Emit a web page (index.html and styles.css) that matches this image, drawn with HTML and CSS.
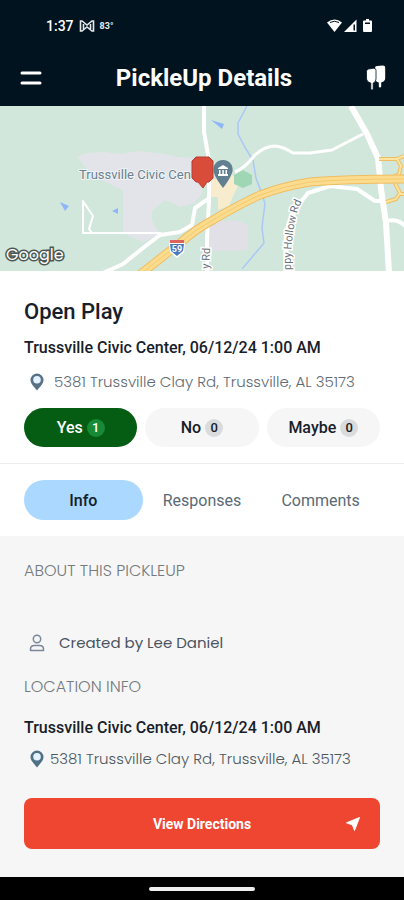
FILE: index.html
```html
<!DOCTYPE html>
<html lang="en">
<head>
<meta charset="utf-8">
<meta name="viewport" content="width=device-width, initial-scale=1">
<title>PickleUp Details</title>
<link rel="stylesheet" href="styles.css">
</head>
<body>
<div class="app">
  <header class="top">
    <div class="status">
      <span class="clock">1:37</span>
      <svg class="glyph" width="16" height="12" viewBox="0 0 16 12" fill="none" stroke="#e6eaec" stroke-width="1.600"><path d="M3 11H1.500V1H3l5 4 5-4h1.500v10H13L8 7z"/><path d="M4.500 4v5M11.500 4v5"/></svg>
      <span class="temp">83°</span>
      <span class="radios">
        <svg width="15" height="14" viewBox="0 0 15 14"><path d="M0 3.500Q7.500-2.500 15 3.500L7.500 13z" fill="#fff"/><path d="M3 3.500q4.500-2.500 9 0" stroke="#00131f" stroke-width="1" fill="none"/></svg>
        <svg width="13" height="14" viewBox="0 0 13 14"><path d="M12.500.5v12.500H0z" fill="#fff"/><path d="M9.500 5.500h1.500v6H9.500z" fill="#00131f"/></svg>
        <svg class="battery" width="9" height="14" viewBox="0 0 9 14"><path d="M3 0h3v1.500h2q1 0 1 1V12q0 1-1 1H1q-1 0-1-1V2.500q0-1 1-1h2z" fill="#fff"/><path d="M2 3.500h5v1.500H2z" fill="#00131f"/></svg>
      </span>
    </div>
    <div class="bar">
      <button class="icon-button" type="button" aria-label="Menu">
        <svg width="22" height="16" viewBox="0 0 22 16" stroke="#fff" stroke-width="3" stroke-linecap="round"><path d="M2 3h18M2 13h18"/></svg>
      </button>
      <h1 class="title">PickleUp Details</h1>
      <button class="icon-button" type="button" aria-label="Paddles">
        <svg width="20" height="26" viewBox="0 0 20 26" fill="#fff"><path d="M9 3q0-2 2-2l6-.5q2.200 0 2.200 2V13q0 3-3 4l-1 .4v4q0 1-1.200 1t-1.200-1v-4Q9 17 9 12z"/><path d="M2.500 4l5-.8q2.500 0 2.500 2V14q0 3-2.800 4v6q0 1-1.200 1t-1.200-1v-6Q.5 17 .5 13V6.500Q.5 4.300 2.500 4z" stroke="#00131f" stroke-width=".8"/></svg>
      </button>
    </div>
  </header>

  <svg class="map" viewBox="0 0 404 165" preserveAspectRatio="xMidYMid slice" role="img" aria-label="Map of Trussville Civic Center">
    <defs>
      <path id="hollow" d="M291 164Q290 132 298 104L305 88"/>
      <path id="hwy" d="M138 170L180 137Q196 123 213 114Q238 99 260 89Q284 80 310 76Q345 73 404 73"/>
    </defs>
    <path fill="#d2e7db" d="M0 0h404v165H0z"/>
    <path fill="#e3e4e9" d="M77 51l9-4 18-1 16 2 20-3 24 3 14 3 15 1 9 5v31l-7 9-15 4-15-7-13 11v10l8 13-17 8-20-9V85l-19-10-14-7-7-10z"/>
    <path fill="#e0e0e6" d="M209 115h32l7 5v24l-15 1h-24z"/>
    <path fill="#f7eccd" d="M207 76l24-9 8 11-5 10-5 12-11 4v-13h-11z"/>
    <path fill="#9fd7b4" d="M234 69l9-5 9 5v9l-9 4-9-4z"/>
    <path fill="#8fb6fa" d="M211 14l13 4-2 5zM60 96l9 4-4 5zM112 105l6-3v6z"/>
    <path fill="none" stroke="#aac8f7" stroke-width="1.500" d="M247 0l-9 17v11l8 15 7 11 3 18 6 16 3 10-2 15-1 9 2 15-22 26"/>
    <g fill="none" stroke="#fff" stroke-linejoin="round">
      <path stroke-width="2" d="M161 127H83V95l10 15-4 13 3 4"/>
      <path stroke-width="4" d="M103 167l20-9 20-16 17-13 20-3 12-7 3-17 13-9"/>
      <path stroke-width="4" d="M204 0v26l5 28v40l-2 40v33"/>
      <path stroke-width="3" d="M235 66q10-4 20-17 10-9 20-9 9 1 18 7h17l22-3 31-16"/>
      <path stroke-width="6" d="M351 0l16 28 11 24 3 31 5 34 3 50"/>
      <path stroke-width="4" d="M381 95h-6l-18-12-27-3-22 7-8 10-8 9M387 115q11-3 19 6"/>
      <path stroke-width="5" d="M296 103q-10 15-10 35v29"/>
    </g>
    <g fill="none" stroke="#efbd61" stroke-width="4">
      <path d="M379 53h18l4 7-2 8-7 4M397 53l7-3M394 75l6 12-4 6-10 3M399 88h6"/>
      <path stroke="#fbe3a0" stroke-width="2" d="M379 53h18l4 7-2 8-7 4M397 53l7-3M394 75l6 12-4 6-10 3M399 88h6"/>
      <use href="#hwy" stroke-width="9"/>
      <use href="#hwy" stroke="#fbdc8e" stroke-width="7"/>
      <use href="#hwy" stroke="#f5ca70" stroke-width="1"/>
    </g>
    <path fill="#fff" d="M169 137h16l-1 9-7 6-7-6z"/>
    <path fill="#4b78bd" d="M170 138h14l-1 7-6 5-6-5z"/><path fill="#dc625d" d="M170 134h14v3h-14z"/>
    <text x="177" y="146" class="shield" text-anchor="middle">59</text>
    <text x="79" y="73" class="place">Trussville Civic Cen</text>
    <text class="road"><textPath href="#hollow">ppy Hollow Rd</textPath></text>
    <text class="road" transform="translate(209 163) rotate(-87)">y Rd</text>
    <path fill="#d94c39" stroke="#b93d32" stroke-width="1" d="M196 51h13l4 4v17l-4 4h-2l-4 6-5-6h-2l-4-4V55z"/>
    <path fill="#617f90" d="M223 54a9.500 9.500 0 0 1 9 13q-2 6-9 15-7-9-9-15a9.500 9.500 0 0 1 9-13z"/>
    <path fill="#fff" d="M218 62l5-3 5 3v1h-10zM218 68h10v2h-10zM219 64h1.500v4H219zM222.300 64h1.500v4h-1.500zM225.500 64h1.500v4h-1.500z"/>
    <text x="6" y="154" class="google">Google</text>
  </svg>

  <main class="main">
    <section class="summary">
      <h2 class="event">Open Play</h2>
      <p class="venue">Trussville Civic Center, 06/12/24 1:00 AM</p>
      <p class="address"><svg class="pin" width="14" height="18" viewBox="0 0 14 18"><path d="M7 .5a6.500 6.500 0 0 1 6.500 6.500c0 4-4 7-6.500 10.500C4.500 14 .5 11 .5 7A6.500 6.500 0 0 1 7 .5z" fill="#587186"/><circle cx="7" cy="6.800" r="3.800" fill="#e4f2ff"/></svg>5381 Trussville Clay Rd, Trussville, AL 35173</p>
      <div class="votes">
        <button class="vote vote-on" type="button">Yes <span class="count">1</span></button>
        <button class="vote" type="button">No <span class="count">0</span></button>
        <button class="vote" type="button">Maybe <span class="count">0</span></button>
      </div>
    </section>
    <nav class="tabs">
      <button class="tab tab-on" type="button">Info</button>
      <button class="tab" type="button">Responses</button>
      <button class="tab" type="button">Comments</button>
    </nav>
    <section class="details">
      <h3 class="label">ABOUT THIS PICKLEUP</h3>
      <p class="creator"><svg width="16" height="18" viewBox="0 0 16 18" fill="none" stroke="#7c8799" stroke-width="1.500"><circle cx="8" cy="5" r="3.700"/><path d="M1.500 16.500v-1.500q0-3.500 4-3.500h5q4 0 4 3.500v1.500z" stroke-linejoin="round"/></svg>Created by Lee Daniel</p>
      <h3 class="label">LOCATION INFO</h3>
      <p class="venue">Trussville Civic Center, 06/12/24 1:00 AM</p>
      <p class="address address-tight"><svg class="pin" width="14" height="18" viewBox="0 0 14 18"><path d="M7 .5a6.500 6.500 0 0 1 6.500 6.500c0 4-4 7-6.500 10.500C4.500 14 .5 11 .5 7A6.500 6.500 0 0 1 7 .5z" fill="#4f7186"/><circle cx="7" cy="6.800" r="3.800" fill="#e4f2ff"/></svg>5381 Trussville Clay Rd, Trussville, AL 35173</p>
      <button class="directions" type="button"><span>View Directions</span><svg width="14" height="14" viewBox="0 0 14 14" fill="#fff"><path d="M13.500.5L8.500 13.500 6.500 8 .5 5.800z" stroke="#fff" stroke-linejoin="round"/></svg></button>
    </section>
  </main>
  <footer class="system"><span class="handle"></span></footer>
</div>
</body>
</html>
```
FILE: styles.css
```css
* { box-sizing: border-box; }
body { margin: 0; font-family: Roboto, sans-serif; color: #17202a; background: #f6f6f6; }
h1, h2, h3, p { margin: 0; }
button { font: inherit; color: inherit; border: 0; padding: 0; background: none; }
svg { flex: none; }

.app { display: flex; flex-direction: column; min-height: 100vh; }

.top { background: #00131f; color: #fff; padding-bottom: 8px; }
.status { display: flex; align-items: center; gap: 5px; height: 50px; padding: 2px 32px 0 46px; }
.clock { font-size: 14px; font-weight: 500; }
.temp { font-size: 9px; font-weight: 700; color: #e6eaec; }
.radios { display: flex; align-items: center; gap: 2px; margin-left: auto; }
.battery { margin-left: 4px; }
.bar { display: flex; align-items: center; justify-content: space-between; height: 48px; padding: 8px 18px 0 20px; }
.icon-button { display: flex; }
.title { font-size: 24px; line-height: 28px; font-weight: 700; }

.map { display: block; width: 100%; min-height: 165px; }
.place { font-size: 13px; fill: #6b8090; stroke: #f0f4f4; stroke-width: 2px; paint-order: stroke; }
.road { font-size: 11px; fill: #6c7378; stroke: #fff; stroke-width: 3px; paint-order: stroke; }
.shield { font-size: 9px; font-weight: 700; fill: #fff; }
.google { font-family: Poppins, Lato, sans-serif; font-size: 16px; font-weight: 400; fill: #fff; stroke: #4c5753; stroke-width: 3px; paint-order: stroke; }

.main { flex: 1; display: flex; flex-direction: column; }
.summary { background: #fff; padding: 27px 24px 16px; border-bottom: 1px solid #eee; }
.event { font-size: 22px; line-height: 28px; font-weight: 500; }
.venue { font-size: 16px; line-height: 20px; font-weight: 500; }
.summary .venue { margin-top: 12px; }
.address { display: flex; align-items: center; gap: 10px; padding-left: 6px; margin-top: 14px; font-family: Poppins, Inter, sans-serif; font-size: 15px; line-height: 20px; font-weight: 300; color: #5f6b75; white-space: nowrap; }
.address-tight { gap: 6px; margin-top: 11px; color: #4c585f; }

.votes { display: grid; grid-template-columns: repeat(3, 1fr); gap: 8px; margin-top: 16px; }
.vote { display: flex; align-items: center; justify-content: center; gap: 4px; height: 39px; border-radius: 20px; background: #f6f6f6; font-size: 16px; font-weight: 500; }
.vote-on { background: #045d13; color: #fff; }
.count { width: 18px; height: 18px; border-radius: 9px; background: #d9dbdc; font-size: 13px; line-height: 18px; text-align: center; }
.vote-on .count { background: #188a35; }

.tabs { display: grid; grid-template-columns: repeat(3, 1fr); background: #fff; padding: 16px 24px; }
.tab { height: 40px; border-radius: 20px; font-size: 16px; color: #5a6a76; }
.tab-on { background: #abd8ff; color: #10202c; font-weight: 500; }

.details { padding: 25px 24px 27px; }
.label { font-family: Poppins, Inter, sans-serif; font-size: 16px; line-height: 20px; font-weight: 300; color: #747a7e; }
.creator { display: flex; align-items: center; gap: 14px; margin: 52px 0 24px; padding-left: 5px; font-family: Poppins, Inter, sans-serif; font-size: 15px; line-height: 20px; color: #4b5260; }
.details .venue { margin-top: 21px; }
.directions { display: grid; grid-template-columns: 1fr auto 1fr; align-items: center; width: 100%; height: 51px; margin-top: 29px; padding: 0 20px; border-radius: 8px; background: #ef4631; color: #fff; font-size: 14px; font-weight: 700; }
.directions span { grid-column: 2; }
.directions svg { justify-self: end; }

.system { display: flex; justify-content: center; align-items: center; height: 23px; background: #000; }
.handle { width: 106px; height: 4px; border-radius: 2px; background: #eee; }
```
